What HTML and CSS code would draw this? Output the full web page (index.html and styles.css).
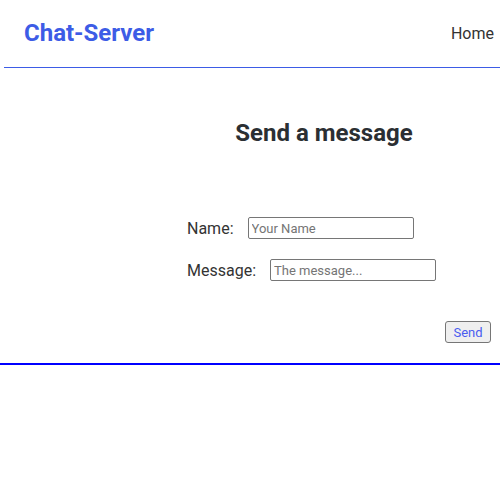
FILE: index.html
```html
<!DOCTYPE html>
<html>
<head>
<meta charset="utf-8">
<link rel="stylesheet" href="styles.css">
</head>
<body>
<header class="topbar">
  <a class="brand">Chat-Server</a>
  <nav class="nav"><a class="nav-link">Home</a></nav>
</header>
<main class="main">
  <h2 class="title">Send a message</h2>
  <form class="form">
    <div class="row"><label class="label label-name">Name:</label><input class="field" type="text" placeholder="Your Name"></div>
    <div class="row"><label class="label label-msg">Message:</label><input class="field" type="text" placeholder="The message..."></div>
    <div class="actions"><button class="send" type="button">Send</button></div>
  </form>
</main>
<div class="rule"></div>
</body>
</html>
```
FILE: styles.css
```css
html, body { margin: 0; padding: 0; background: #fff; }
body { font-family: Roboto, "Liberation Sans", sans-serif; color: #333; }
.topbar {
  margin-left: 4px;
  height: 67px;
  border-bottom: 1px solid #3d5ce6;
  display: flex;
  align-items: center;
  justify-content: space-between;
  padding: 0 6px 0 20px;
}
.brand { font-size: 24px; font-weight: 700; color: #3d5ce6; margin-bottom: 1px; }
.nav-link { font-size: 16px; color: #333; }
.main { padding-left: 148px; }
.title {
  margin: 0;
  padding-top: 50px;
  height: 30px;
  line-height: 30px;
  text-align: center;
  font-size: 24px;
  font-weight: 700;
  color: #2b2f33;
}
.form { margin: 0; padding-top: 69px; }
.row { display: flex; align-items: center; margin-left: 39px; height: 22px; margin-bottom: 20px; }
.label { font-size: 16px; color: #333; }
.label-name { margin-right: 14px; }
.label-msg { margin-right: 14px; }
.field {
  box-sizing: border-box;
  width: 166px;
  height: 22px;
  border: 1px solid #767676;
  border-radius: 2px;
  padding: 1px 3px;
  font-family: Roboto, "Liberation Sans", sans-serif;
  font-size: 13px;
}
.field::placeholder { color: #757575; }
.actions { display: flex; justify-content: flex-end; padding-top: 20px; padding-right: 9px; padding-bottom: 20px; }
.send {
  box-sizing: border-box;
  width: 46px;
  height: 22px;
  font-family: Roboto, "Liberation Sans", sans-serif;
  font-size: 13px;
  color: #4a5cf0;
  background: #efefef;
  border: 1px solid #767676;
  border-radius: 3px;
  padding: 0;
}
.rule { height: 2px; background: #0000ff; }
```
